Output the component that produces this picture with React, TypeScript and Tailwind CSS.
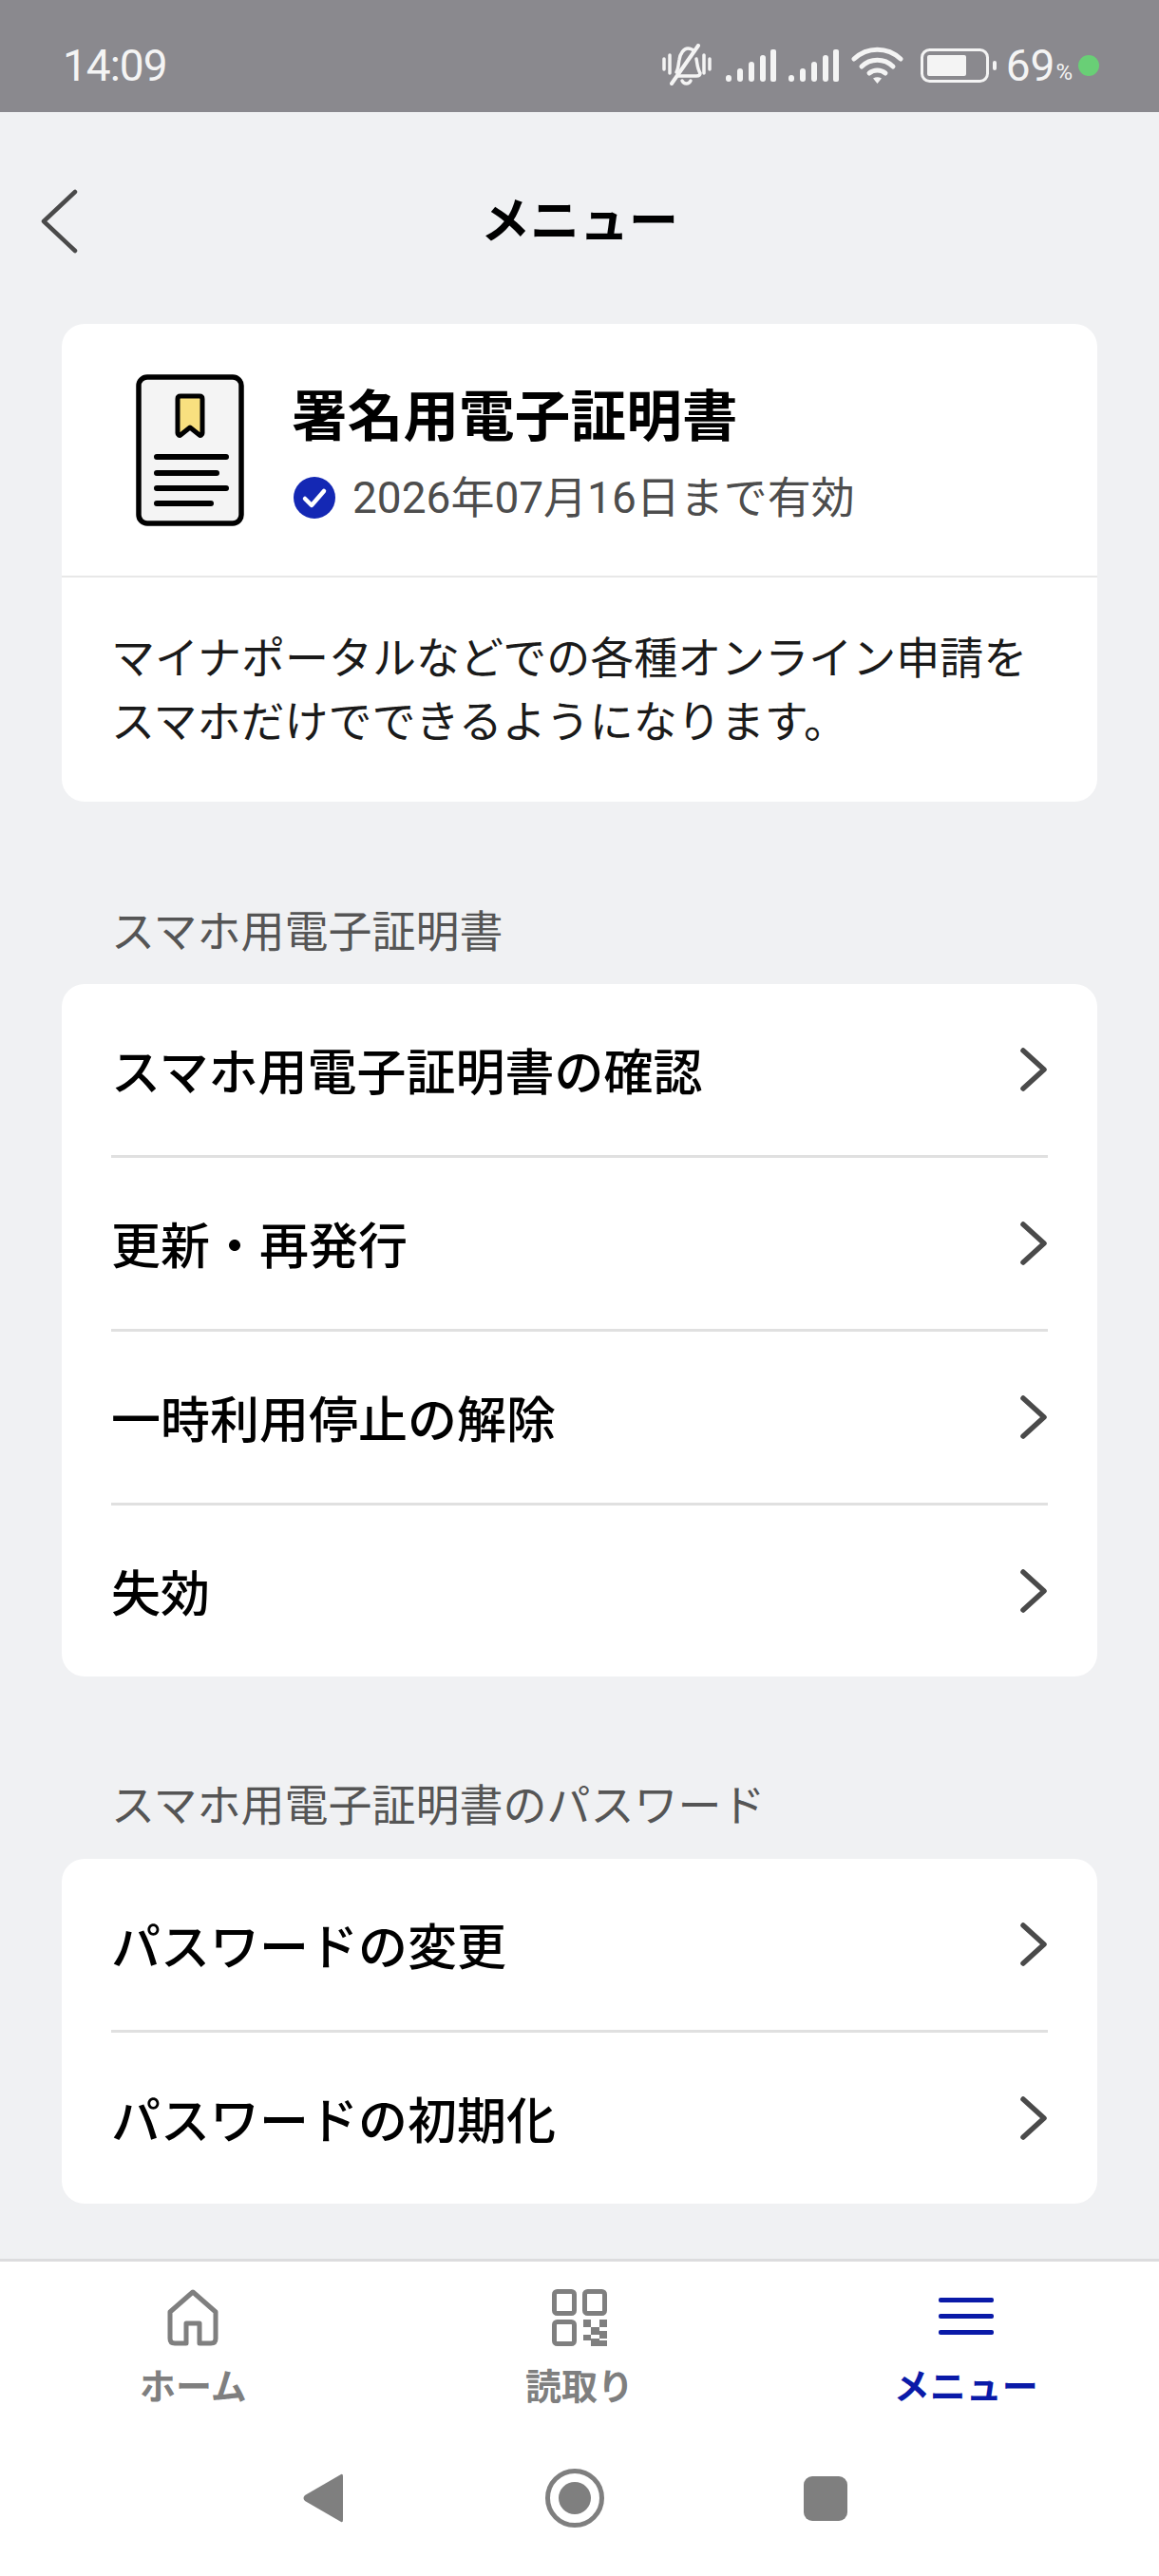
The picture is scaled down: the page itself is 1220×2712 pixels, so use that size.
import React from "react";

const jp = "font-['Roboto','Noto_Sans_CJK_JP',sans-serif]";

function Chevron() {
  return (
    <svg width="30" height="48" viewBox="0 0 30 48" fill="none" className="shrink-0">
      <path d="M4 4 L26 24 L4 44" stroke="#4a4a4a" strokeWidth="5.5" strokeLinecap="round" strokeLinejoin="round" />
    </svg>
  );
}

function Row({ label }: { label: string }) {
  return (
    <div className="h-[180px] flex items-center justify-between pl-[52px] pr-[52px]">
      <span className="text-[52px] leading-none font-medium text-black mt-[9px]">{label}</span>
      <Chevron />
    </div>
  );
}

function Divider() {
  return <div className="h-[3px] mx-[52px] bg-[#e0e0e0]" />;
}

function Signal() {
  return (
    <svg width="53" height="34" viewBox="0 0 53 34" fill="#f4f4f4">
      <rect x="0" y="27" width="6" height="7" rx="3" />
      <rect x="12" y="20" width="6" height="14" rx="3" />
      <rect x="24" y="13" width="6" height="21" rx="3" />
      <rect x="36" y="6" width="6" height="28" rx="3" />
      <rect x="47" y="0" width="6" height="34" rx="2" />
    </svg>
  );
}

function StatusBar() {
  return (
    <div className="h-[118px] bg-[#8a898e] flex items-center pl-[66px] pr-[63px] pt-[20px] text-[#f4f4f4] font-['Roboto',sans-serif]">
      <span className="text-[46px] leading-none tracking-[-1px]">14:09</span>
      <div className="ml-auto flex items-center">
        <svg width="52" height="46" viewBox="0 0 52 46" fill="none" stroke="#f4f4f4" strokeWidth="3.5" strokeLinecap="round" strokeLinejoin="round">
          <path d="M2 16v11M8 12v19M44 12v19M50 16v11" />
          <path d="M15 30c2-3 2-8 3-13 1-7 5-12 9-12 3 0 5 1 7 3M36 16c1 5 1 10 4 15 0 2-1 3-4 3H17" />
          <path d="M38 2 L10 42" strokeWidth="4" />
          <path d="M21 39c2 4 7 4 9 0" />
        </svg>
        <div className="ml-[15px]"><Signal /></div>
        <div className="ml-[13px]"><Signal /></div>
        <svg className="ml-[13px]" width="55" height="40" viewBox="0 0 55 40" fill="none" stroke="#f4f4f4" strokeWidth="5" strokeLinecap="round">
          <path d="M3 13C17 0 38 0 52 13" />
          <path d="M11 21C20 12 35 12 44 21" />
          <path d="M19 28C24 24 31 24 36 28" />
          <path d="M27.500 39 L23 33.500 Q27.500 31 32 33.500Z" fill="#f4f4f4" stroke="none" />
        </svg>
        <svg className="ml-[18px]" width="80" height="36" viewBox="0 0 80 36" fill="none">
          <rect x="1.500" y="1.500" width="69" height="33" rx="8" stroke="#f4f4f4" strokeWidth="3" />
          <rect x="7" y="7" width="41" height="22" rx="2" fill="#f4f4f4" />
          <rect x="76" y="13" width="4" height="10" rx="2" fill="#f4f4f4" />
        </svg>
        <span className="ml-[10px] text-[46px] leading-none">69</span>
        <span className="text-[24px] leading-none mt-[14px] ml-[1px]">%</span>
        <span className="ml-[6px] w-[22px] h-[22px] rounded-full bg-[#69cf76]" />
      </div>
    </div>
  );
}

function DocIcon() {
  return (
    <svg width="114" height="160" viewBox="0 0 114 160" fill="none" className="shrink-0">
      <rect x="3" y="3" width="108" height="154" rx="9" fill="#f4f4f4" stroke="#000" strokeWidth="5.500" />
      <path d="M44 26c0-2 1-3 3-3h20c2 0 3 1 3 3v36c0 2-2 3-3 2L57 56 47 64c-1 1-3 0-3-2Z" fill="#f8e07f" stroke="#000" strokeWidth="5" strokeLinejoin="round" />
      <path d="M22 87h73M22 104h63M22 120h73M22 136h57" stroke="#000" strokeWidth="6" strokeLinecap="round" />
    </svg>
  );
}

function NavItem({ icon, label, active }: { icon: React.ReactNode; label: string; active?: boolean }) {
  return (
    <div className="flex flex-col items-center">
      <div className="h-[60px] flex items-center justify-center">{icon}</div>
      <span className={active ? "mt-[18px] text-[38px] leading-[50px] font-bold text-[#0a1aa8]" : "mt-[18px] text-[38px] leading-[50px] font-bold text-[#7f7f7f]"}>
        {label}
      </span>
    </div>
  );
}

export default function App() {
  return (
    <div className={`w-[1220px] h-[2712px] flex flex-col bg-[#f0f1f3] overflow-hidden ${jp}`}>
      <StatusBar />

      <div className="relative h-[223px] flex items-start justify-center pt-[86px]">
        <svg className="absolute left-[40px] top-[80px]" width="44" height="70" viewBox="0 0 44 70" fill="none">
          <path d="M39 4 L6 35 L39 66" stroke="#4a4a4a" strokeWidth="4.500" strokeLinecap="round" strokeLinejoin="round" />
        </svg>
        <h1 className="text-[52px] leading-[60px] font-bold text-black">メニュー</h1>
      </div>

      <div className="flex-1 px-[65px]">
        <section className="bg-white rounded-[24px] h-[503px] flex flex-col">
          <div className="h-[267px] shrink-0 flex items-start pl-[78px] pt-[53px] pr-[40px] border-b-2 border-[#e8e8e8]">
            <DocIcon />
            <div className="ml-[53px]">
              <div className="text-[58.500px] leading-[70px] font-bold text-black mt-[10px] ml-[-3px] tracking-[0.2px]">署名用電子証明書</div>
              <div className="flex items-center mt-[22px] ml-[-1px]">
                <svg width="44" height="44" viewBox="0 0 44 44" className="shrink-0">
                  <circle cx="22" cy="22" r="22" fill="#1428b4" />
                  <path d="M12 23 L19 30 L32 15" fill="none" stroke="#fff" strokeWidth="4.500" strokeLinecap="round" strokeLinejoin="round" />
                </svg>
                <span className="ml-[18px] text-[46px] leading-[56px] text-[#4d4d4d]">2026年07月16日まで有効</span>
              </div>
            </div>
          </div>
          <p className="mt-[52px] ml-[52px] text-[46px] leading-[67px] text-[#1a1a1a]">
            マイナポータルなどでの各種オンライン申請を
            <br />
            スマホだけでできるようになります。
          </p>
        </section>

        <div className="mt-[104px] mb-[22px] ml-[52px] text-[46px] leading-[66px] text-[#555555]">スマホ用電子証明書</div>
        <section className="bg-white rounded-[24px]">
          <Row label="スマホ用電子証明書の確認" />
          <Divider />
          <Row label="更新・再発行" />
          <Divider />
          <Row label="一時利用停止の解除" />
          <Divider />
          <Row label="失効" />
        </section>

        <div className="mt-[102px] mb-[22px] ml-[52px] text-[46px] leading-[68px] text-[#555555]">スマホ用電子証明書のパスワード</div>
        <section className="bg-white rounded-[24px]">
          <Row label="パスワードの変更" />
          <Divider />
          <Row label="パスワードの初期化" />
        </section>
      </div>

      <div className="h-[334px] bg-white border-t-[3px] border-[#dcdcde] flex flex-col">
        <div className="grid grid-cols-3 pt-[29px]">
          <NavItem
            label="ホーム"
            icon={
              <svg width="54" height="60" viewBox="0 0 54 60" fill="none" stroke="#7f7f7f" strokeWidth="5" strokeLinejoin="round">
                <path d="M27 3 L3 24 V52 Q3 57 8 57 H20 V36 H34 V57 H46 Q51 57 51 52 V24 Z" />
              </svg>
            }
          />
          <NavItem
            label="読取り"
            icon={
              <svg width="58" height="60" viewBox="0 0 58 60" fill="none">
                <g stroke="#7f7f7f" strokeWidth="5">
                  <rect x="2.500" y="2.500" width="21" height="23" rx="3" />
                  <rect x="34.500" y="2.500" width="21" height="23" rx="3" />
                  <rect x="2.500" y="34.500" width="21" height="23" rx="3" />
                </g>
                <g fill="#7f7f7f">
                  <rect x="33" y="32" width="8" height="8" />
                  <rect x="50" y="32" width="8" height="8" />
                  <rect x="41" y="40" width="9" height="8" />
                  <rect x="33" y="48" width="8" height="6" />
                  <rect x="50" y="44" width="8" height="8" />
                  <rect x="41" y="52" width="9" height="8" />
                  <rect x="50" y="54" width="8" height="6" />
                </g>
              </svg>
            }
          />
          <NavItem
            active
            label="メニュー"
            icon={
              <svg width="58" height="42" viewBox="0 0 58 42" fill="#0a1aa8">
                <rect y="0" width="58" height="5" rx="2" />
                <rect y="17" width="58" height="5" rx="2" />
                <rect y="34" width="58" height="5" rx="2" />
              </svg>
            }
          />
        </div>
        <div className="flex items-center pl-[319px] mt-[60px]">
          <svg width="42" height="54" viewBox="0 0 42 54" fill="#7f7f7f">
            <path d="M40 2 Q42 1 42 4 V50 Q42 53 40 52 L2 30 Q-1 27 2 24 Z" />
          </svg>
          <svg className="ml-[213px]" width="62" height="64" viewBox="0 0 62 64" fill="none">
            <circle cx="31" cy="32" r="28.500" stroke="#7f7f7f" strokeWidth="5" />
            <circle cx="31" cy="32" r="17" fill="#7f7f7f" />
          </svg>
          <div className="ml-[210px] w-[46px] h-[47px] rounded-[9px] bg-[#7f7f7f]" />
        </div>
      </div>
    </div>
  );
}
